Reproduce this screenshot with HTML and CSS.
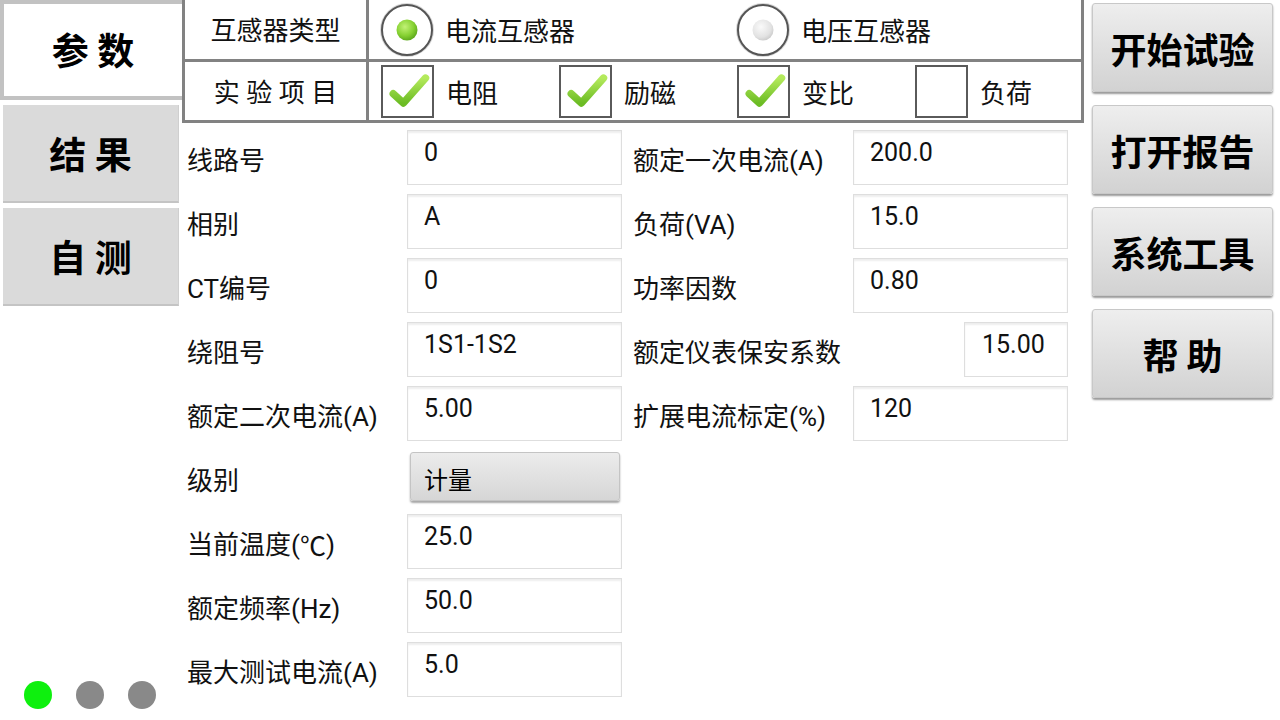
FILE: index.html
```html
<!DOCTYPE html>
<html lang="zh">
<head>
<meta charset="utf-8">
<title>参数</title>
<link rel="stylesheet" href="styles.css">
</head>
<body>
<div class="app">
  <aside class="tabs">
    <div class="tab active">参 数</div>
    <div class="tab">结 果</div>
    <div class="tab">自 测</div>
    <div class="dots">
      <span class="dot on"></span>
      <span class="dot"></span>
      <span class="dot"></span>
    </div>
  </aside>

  <main class="main">
    <div class="head">
      <div class="hcell hlabel">互感器类型</div>
      <div class="hcell opts two">
        <div class="opt">
          <svg class="radio" viewBox="0 0 56 56" width="56" height="56">
            <defs>
              <radialGradient id="rg1" cx="0.4" cy="0.35" r="0.7">
                <stop offset="0" stop-color="#c2f276"/>
                <stop offset="0.6" stop-color="#86d132"/>
                <stop offset="1" stop-color="#58a31a"/>
              </radialGradient>
            </defs>
            <circle cx="28" cy="28" r="26" fill="#fff" stroke="#d8d8d8" stroke-width="2"/>
            <circle cx="28" cy="28" r="25" fill="#fff" stroke="#555" stroke-width="2"/>
            <circle cx="28" cy="28" r="10.5" fill="url(#rg1)"/>
          </svg>
          <span>电流互感器</span>
        </div>
        <div class="opt">
          <svg class="radio" viewBox="0 0 56 56" width="56" height="56">
            <defs>
              <radialGradient id="rg2" cx="0.4" cy="0.35" r="0.7">
                <stop offset="0" stop-color="#fafafa"/>
                <stop offset="0.7" stop-color="#e2e2e2"/>
                <stop offset="1" stop-color="#c8c8c8"/>
              </radialGradient>
            </defs>
            <circle cx="28" cy="28" r="26" fill="#fff" stroke="#d8d8d8" stroke-width="2"/>
            <circle cx="28" cy="28" r="25" fill="#fff" stroke="#555" stroke-width="2"/>
            <circle cx="28" cy="28" r="10.5" fill="url(#rg2)"/>
          </svg>
          <span>电压互感器</span>
        </div>
      </div>
      <div class="hcell hlabel">实 验 项 目</div>
      <div class="hcell opts four">
        <div class="opt">
          <span class="cb"><svg viewBox="0 0 52 52" width="48" height="48"><defs><linearGradient id="cg" x1="0" y1="0" x2="0" y2="1"><stop offset="0" stop-color="#b4ea5c"/><stop offset="1" stop-color="#6cbc24"/></linearGradient></defs><polyline points="10,29 21,39 45,12" fill="none" stroke="url(#cg)" stroke-width="8" stroke-linecap="round" stroke-linejoin="round"/></svg></span>
          <span>电阻</span>
        </div>
        <div class="opt">
          <span class="cb"><svg viewBox="0 0 52 52" width="48" height="48"><polyline points="10,29 21,39 45,12" fill="none" stroke="url(#cg)" stroke-width="8" stroke-linecap="round" stroke-linejoin="round"/></svg></span>
          <span>励磁</span>
        </div>
        <div class="opt">
          <span class="cb"><svg viewBox="0 0 52 52" width="48" height="48"><polyline points="10,29 21,39 45,12" fill="none" stroke="url(#cg)" stroke-width="8" stroke-linecap="round" stroke-linejoin="round"/></svg></span>
          <span>变比</span>
        </div>
        <div class="opt">
          <span class="cb"></span>
          <span>负荷</span>
        </div>
      </div>
    </div>

    <div class="form">
      <div class="lbl">线路号</div>
      <div class="inp">0</div>
      <div class="lbl">额定一次电流(A)</div>
      <div class="inp">200.0</div>

      <div class="lbl">相别</div>
      <div class="inp">A</div>
      <div class="lbl">负荷(VA)</div>
      <div class="inp">15.0</div>

      <div class="lbl">CT编号</div>
      <div class="inp">0</div>
      <div class="lbl">功率因数</div>
      <div class="inp">0.80</div>

      <div class="lbl">绕阻号</div>
      <div class="inp">1S1-1S2</div>
      <div class="lbl">额定仪表保安系数</div>
      <div class="inp narrow">15.00</div>

      <div class="lbl">额定二次电流(A)</div>
      <div class="inp">5.00</div>
      <div class="lbl">扩展电流标定(%)</div>
      <div class="inp">120</div>

      <div class="lbl">级别</div>
      <div class="selwrap"><div class="sel">计量</div></div>
      <div></div>
      <div></div>

      <div class="lbl">当前温度(<span class="cjk">℃</span>)</div>
      <div class="inp">25.0</div>
      <div></div>
      <div></div>

      <div class="lbl">额定频率(Hz)</div>
      <div class="inp">50.0</div>
      <div></div>
      <div></div>

      <div class="lbl">最大测试电流(A)</div>
      <div class="inp">5.0</div>
      <div></div>
      <div></div>
    </div>
  </main>

  <aside class="actions">
    <div class="btn">开始试验</div>
    <div class="btn">打开报告</div>
    <div class="btn">系统工具</div>
    <div class="btn">帮 助</div>
  </aside>
</div>
</body>
</html>
```
FILE: styles.css
```css
* { box-sizing: border-box; }
html, body {
  margin: 0;
  padding: 0;
  background: #fff;
}
body {
  width: 1280px;
  height: 720px;
  overflow: hidden;
  font-family: Roboto, "Noto Sans CJK SC", sans-serif;
  color: #111;
}
.app {
  display: flex;
  width: 1280px;
  height: 720px;
}
.cjk { font-family: "Noto Sans CJK SC", sans-serif; }

/* left tabs */
.tabs {
  width: 182px;
  flex: none;
  display: flex;
  flex-direction: column;
}
.tab {
  display: flex;
  align-items: center;
  justify-content: center;
  font-family: "Noto Sans CJK SC", sans-serif;
  font-weight: 700;
  font-size: 37px;
  color: #000;
  background: #dadada;
  border-bottom: 2px solid #c4c4c4;
  border-right: 1px solid #cfcfcf;
  width: 176px;
  height: 98px;
  margin: 5px 0 0 3px;
}
.tab.active {
  background: #fff;
  border: 4px solid #c2c2c2;
  border-right: none;
  width: 182px;
  height: 100px;
  margin: 0;
  padding-bottom: 2px;
}
.dots {
  margin-top: auto;
  display: flex;
  gap: 24px;
  padding: 0 0 11px 24px;
}
.dot {
  width: 28px;
  height: 28px;
  border-radius: 50%;
  background: #898989;
}
.dot.on { background: #0ef00e; }

/* main */
.main {
  width: 902px;
  flex: none;
  display: flex;
  flex-direction: column;
}
.head {
  display: grid;
  grid-template-columns: 181px 712px;
  grid-template-rows: 59px 58px;
  gap: 3px;
  padding: 0 3px 3px 3px;
  background: #828282;
}
.hcell {
  background: #fff;
  font-size: 26px;
  line-height: 30px;
  color: #111;
}
.hlabel {
  display: flex;
  align-items: center;
  justify-content: center;
  padding-top: 3px;
}
.opts {
  display: grid;
}
.opts.two { grid-template-columns: 356px 356px; }
.opts.four { grid-template-columns: 178px 178px 178px 178px; }
.opt {
  display: flex;
  align-items: center;
}
.opts.two .opt { padding-left: 10px; gap: 10px; }
.opts.two .opt span { padding-top: 4px; }
.opts.four .opt { padding-left: 12px; gap: 12px; }
.opts.four .opt span:last-child { padding-top: 5px; }
.radio { flex: none; }
.cb {
  flex: none;
  width: 53px;
  height: 53px;
  border: 2px solid #5a5a5a;
  background: #fff;
  display: flex;
  align-items: center;
  justify-content: center;
}

/* form */
.form {
  display: grid;
  grid-template-columns: 225px 215px 231px 215px;
  grid-auto-rows: 55px;
  row-gap: 9px;
  margin-top: 7px;
  padding-left: 0;
}
.lbl {
  display: flex;
  align-items: center;
  padding: 7px 0 0 5px;
  font-size: 26px;
  line-height: 30px;
  color: #111;
  white-space: nowrap;
}
.form .lbl:nth-child(4n+3) { padding-left: 11px; }
.inp {
  background: #fff;
  border: 1px solid #dedede;
  box-shadow: inset 0 2px 2px rgba(0,0,0,0.07);
  font-size: 25px;
  line-height: 30px;
  padding: 7px 0 0 16px;
  color: #111;
}
.inp.narrow {
  width: 104px;
  justify-self: end;
  padding-left: 17px;
}
.selwrap {
  padding: 2px 0 4px 3px;
}
.sel {
  width: 210px;
  height: 49px;
  border-radius: 3px;
  background: linear-gradient(#ececec, #d6d6d6);
  border: 1px solid #c4c4c4;
  box-shadow: 0 2px 2px rgba(0,0,0,0.35);
  font-family: "Noto Sans CJK SC", sans-serif;
  font-size: 24px;
  line-height: 30px;
  padding: 11px 0 0 13px;
  color: #000;
}

/* right */
.actions {
  flex: none;
  width: 196px;
  padding: 3px 0 0 8px;
  display: flex;
  flex-direction: column;
  gap: 13px;
}
.btn {
  width: 181px;
  height: 89px;
  border-radius: 3px;
  background: linear-gradient(#eeeeee, #d2d2d2);
  border: 1px solid #c8c8c8;
  box-shadow: 0 2px 2px rgba(0,0,0,0.4);
  display: flex;
  align-items: center;
  justify-content: center;
  font-family: "Noto Sans CJK SC", sans-serif;
  font-weight: 700;
  font-size: 36px;
  color: #000;
}
```
